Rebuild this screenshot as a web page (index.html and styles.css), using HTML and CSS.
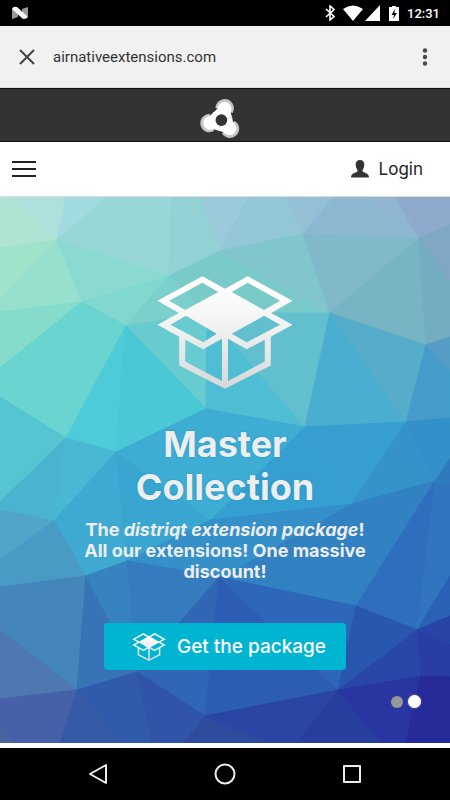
FILE: index.html
```html
<!DOCTYPE html>
<html lang="en">
<head>
<meta charset="utf-8">
<meta name="viewport" content="width=device-width, initial-scale=1">
<title>airnativeextensions.com</title>
<link rel="stylesheet" href="styles.css">
</head>
<body>
<svg class="defs" width="0" height="0" aria-hidden="true">
  <defs>
    <linearGradient id="shade" x1="0" y1="0" x2="0" y2="1">
      <stop offset="0" stop-color="#fff"/><stop offset=".3" stop-color="#f8f8f8"/><stop offset="1" stop-color="#d6d8d9"/>
    </linearGradient>
    <symbol id="box" viewBox="37 34 406 338">
      <path fill="url(#shade)" fill-rule="evenodd" d="M172 35 240 72 308 35 442 108 378 145 442 180 377 216V302L240 371 103 302V216L38 180 102 145 38 108ZM172 54 73 108 121 136 220 82ZM308 54 260 82 357 136 405 108ZM123 153 77 180 175 232 215 207ZM357 153 260 207 305 232 405 180ZM121 225V290L231 348V222L175 253ZM249 222V348L359 290V225L305 253Z"/>
    </symbol>
    <g id="tip">
      <path fill="#222" d="M-30-28A30 30 0 1 1 30-28L20-25H-20Z"/>
      <path fill="#c4c4c4" d="M-26-28A27 27 0 1 1 26-28L18-30H-18Z"/>
    </g>
    <path id="arm" fill="#fff" d="M-20-34A20 20 0 0 1 20-34C20-28 23-23 28-16L0 0-28-16C-23-23-20-28-20-34Z"/>
  </defs>
</svg>

<div class="status">
  <svg width="17" height="14" viewBox="0 0 17 14" aria-hidden="true">
    <path fill="#999" d="M0 3 6 6V11L0 13ZM10 3 16 1V12L10 8Z"/>
    <path fill="#fff" d="M0 3Q1 0 5 1L15 10Q16 13 11 13Z"/>
  </svg>
  <div class="status-icons">
    <svg class="bluetooth" width="10" height="16" viewBox="0 0 10 16" fill="none" stroke="#fff" stroke-width="1.6" aria-hidden="true"><path d="M1 4 9 11.500 5 15V1L9 4.500 1 12"/></svg>
    <svg class="wifi" width="20" height="16" viewBox="0 0 20 16" fill="#fff" aria-hidden="true"><path d="M0 4Q10-3 20 4L10 16Z"/></svg>
    <svg class="signal" width="15" height="16" viewBox="0 0 15 16" fill="#fff" aria-hidden="true"><path d="M0 16 15 0V16Z"/></svg>
    <svg class="battery" width="10" height="15" viewBox="0 0 10 15" aria-hidden="true"><path fill="#fff" d="M0 1H3V0H7V1H10V15H0Z"/><path d="M6 3 2.500 9H5L4 13 8 7H5.500Z"/></svg>
    <span>12:31</span>
  </div>
</div>

<header class="toolbar">
  <button class="icon-button" aria-label="Close"><svg width="16" height="16" viewBox="0 0 16 16" fill="none" stroke="#444" stroke-width="2"><path d="M1 1 15 15M15 1 1 15"/></svg></button>
  <span class="address">airnativeextensions.com</span>
  <button class="icon-button" aria-label="More options"><svg width="6" height="18" viewBox="0 0 6 18" fill="#4a4a4a"><circle cx="3" cy="2.500" r="2.200"/><circle cx="3" cy="9" r="2.200"/><circle cx="3" cy="15.500" r="2.200"/></svg></button>
</header>

<div class="brand">
  <a href="#" aria-label="Home"><svg width="42" height="42" viewBox="-65 -64 122 122">
    <g transform="rotate(15.5)">
      <use href="#tip"/><use href="#tip" transform="rotate(120)"/><use href="#tip" transform="rotate(240)"/>
      <use href="#arm"/><use href="#arm" transform="rotate(120)"/><use href="#arm" transform="rotate(240)"/>
    </g>
    <circle r="17" fill="#333"/>
  </svg></a>
</div>

<nav class="nav">
  <button class="icon-button" aria-label="Menu"><svg width="24" height="18" viewBox="0 0 24 18" stroke="#222" stroke-width="2"><path d="M0 2H24M0 9H24M0 16H24"/></svg></button>
  <a class="login" href="#"><svg width="18" height="18" viewBox="0 0 18 18" fill="#333" aria-hidden="true"><path d="M9 0C12 0 13.500 2 13.300 5 13.300 8 11.500 9 11.500 11 12 13 18 12.500 18 17.500H0C0 12.500 6 13 6.500 11 6.500 9 4.700 8 4.700 5 4.500 2 6 0 9 0Z"/></svg>Login</a>
</nav>

<main class="hero">
  <svg class="mosaic" viewBox="0 0 450 546" preserveAspectRatio="none" aria-hidden="true">
    <g>
      <path color="#afe3d3" d="M0 0H10L57 43 0 51Z"/>
      <path color="#afe1dc" d="M10 0H66L57 43Z"/>
      <path color="#a1dbe0" d="M66 0H107L57 43Z"/>
      <path color="#98d7d8" d="M107 0H172L169 79 57 43Z"/>
      <path color="#92d1d4" d="M172 0H201L220 54 169 79Z"/>
      <path color="#9bcbda" d="M201 0H249L220 54Z"/>
      <path color="#93c7d5" d="M249 0H286L303 37 220 54Z"/>
      <path color="#94c0d6" d="M286 0H334L303 37Z"/>
      <path color="#8cb8d1" d="M334 0H367L419 41 303 37Z"/>
      <path color="#91b4d1" d="M367 0H395L419 41Z"/>
      <path color="#8eabce" d="M395 0H450V28L419 41Z"/>
      <path color="#a0e3cb" d="M0 51 57 43 0 103Z"/>
      <path color="#97e0ce" d="M57 43 82 105 0 115V103Z"/>
      <path color="#8adad1" d="M57 43 169 79 82 105Z"/>
      <path color="#80d8ce" d="M82 105 169 79 126 129Z"/>
      <path color="#85dccb" d="M0 115 82 105 0 171Z"/>
      <path color="#6ad4d1" d="M0 171 82 105 126 129 66 241 0 200Z"/>
      <path color="#7cd0cc" d="M169 79 207 116 126 129Z"/>
      <path color="#7bcaca" d="M169 79 220 54 330 116 207 116Z"/>
      <path color="#82c6cd" d="M220 54 303 37 330 116Z"/>
      <path color="#82b9ca" d="M303 37 419 41 330 116Z"/>
      <path color="#77b5c4" d="M330 116 419 41 426 148Z"/>
      <path color="#74adc1" d="M419 41 450 84V140L426 148Z"/>
      <path color="#80a7c3" d="M419 41 450 28V84Z"/>
      <path color="#68cbd0" d="M126 129 207 116 206 212Z"/>
      <path color="#4fbdd3" d="M207 116 305 230 206 212Z"/>
      <path color="#62bfce" d="M207 116H330L305 230Z"/>
      <path color="#49aed0" d="M330 116 406 225 305 230Z"/>
      <path color="#57adc9" d="M330 116 426 148 406 225Z"/>
      <path color="#459cca" d="M426 148 450 172V221L406 225Z"/>
      <path color="#559dc5" d="M426 148 450 140V172Z"/>
      <path color="#4dcbd8" d="M126 129 116 255 66 241Z"/>
      <path color="#4bc7d6" d="M126 129 206 212 116 255Z"/>
      <path color="#55c5d1" d="M0 200 66 241 0 305Z"/>
      <path color="#4ab4d0" d="M66 241 54 324 0 313V305Z"/>
      <path color="#48b8d3" d="M66 241 116 255 54 324Z"/>
      <path color="#3eaad2" d="M116 255 127 364 86 379 54 324Z"/>
      <path color="#39a6d1" d="M116 255 211 323 127 364Z"/>
      <path color="#3eadd4" d="M116 255 206 212 305 230 211 323Z"/>
      <path color="#369fd1" d="M305 230 352 307 211 323Z"/>
      <path color="#379fd0" d="M305 230 406 225 352 307Z"/>
      <path color="#3693c9" d="M406 225 435 284 352 307Z"/>
      <path color="#3490c8" d="M406 225 450 221V262L435 284Z"/>
      <path color="#50a5c9" d="M0 313 54 324 0 363Z"/>
      <path color="#499bc5" d="M54 324 86 379 0 390V363Z"/>
      <path color="#358fc9" d="M211 323 352 307 222 381 127 364Z"/>
      <path color="#3181c3" d="M352 307 435 284 356 409 222 381Z"/>
      <path color="#2e6ebd" d="M435 284 417 433 356 409Z"/>
      <path color="#3175bf" d="M435 284 450 288V379L417 433Z"/>
      <path color="#3179bd" d="M435 284 450 262V288Z"/>
      <path color="#4485bb" d="M0 390 86 379 77 493 0 433Z"/>
      <path color="#3674b6" d="M86 379 137 475 77 493Z"/>
      <path color="#3683bd" d="M86 379 127 364 137 475Z"/>
      <path color="#347cbd" d="M127 364 219 380 137 475Z"/>
      <path color="#3166b5" d="M219 380 205 519 137 475Z"/>
      <path color="#2d5db3" d="M219 380 338 493 205 519Z"/>
      <path color="#2e67b9" d="M219 380 356 409 338 493Z"/>
      <path color="#2957b0" d="M356 409 417 433 338 493Z"/>
      <path color="#2b61b4" d="M450 379V419L417 433Z"/>
      <path color="#2947a9" d="M417 433 421 479 338 493Z"/>
      <path color="#2944a7" d="M417 433 450 419V448Z"/>
      <path color="#293ea4" d="M417 433 450 448V480L421 479Z"/>
      <path color="#4d78b2" d="M0 433 77 493 0 502Z"/>
      <path color="#4661a7" d="M0 502 77 493 60 546H15L0 535Z"/>
      <path color="#4b659f" d="M0 535 15 546H0Z"/>
      <path color="#355ba6" d="M77 493 122 546H60Z"/>
      <path color="#325aaa" d="M77 493 137 475 152 546H122Z"/>
      <path color="#3055a8" d="M137 475 205 519 184 546H152Z"/>
      <path color="#2d4c9e" d="M205 519 270 546H184Z"/>
      <path color="#2b45a5" d="M205 519 338 493 297 546H270Z"/>
      <path color="#283e9f" d="M338 493 382 546H297Z"/>
      <path color="#2935a0" d="M338 493 421 479 406 546H382Z"/>
      <path color="#262b99" d="M421 479 450 480V546H406Z"/>
    </g>
  </svg>
  <div class="content">
    <svg class="package-icon" width="136" height="113" aria-hidden="true"><use href="#box"/></svg>
    <h1>Master<br>Collection</h1>
    <p>The <em>distriqt extension package</em>!<br>All our extensions! One massive discount!</p>
    <a class="cta" href="#"><svg width="34" height="28" aria-hidden="true"><use href="#box"/></svg>Get the package</a>
  </div>
  <div class="dots">
    <button class="dot" aria-label="Slide 1"></button>
    <button class="dot current" aria-label="Slide 2"></button>
  </div>
</main>

<footer class="system-nav">
  <button class="icon-button" aria-label="Back"><svg width="22" height="22" viewBox="0 0 22 22"><path d="M19 2V20L3 11Z"/></svg></button>
  <button class="icon-button" aria-label="Home"><svg width="22" height="22" viewBox="0 0 22 22"><circle cx="11" cy="11" r="9.500"/></svg></button>
  <button class="icon-button" aria-label="Recent apps"><svg width="22" height="22" viewBox="0 0 22 22"><rect x="3" y="3" width="16" height="16"/></svg></button>
</footer>
</body>
</html>
```
FILE: styles.css
```css
* { box-sizing: border-box; }

body {
  margin: 0;
  min-height: 100vh;
  display: flex;
  flex-direction: column;
  background: #fff;
  color: #222;
  font-family: Roboto, sans-serif;
}

svg { display: block; flex: none; }
a { color: inherit; text-decoration: none; }
.defs { position: absolute; }

.icon-button {
  display: flex;
  padding: 0;
  border: 0;
  background: none;
}

.status {
  display: flex;
  align-items: center;
  justify-content: space-between;
  height: 26px;
  padding: 0 10px 0 12px;
  background: #000;
  color: #fff;
  font-size: 13px;
  font-weight: 500;
}
.status-icons { display: flex; align-items: center; }
.wifi { margin-left: 8px; }
.signal { margin-left: 2px; }
.battery { margin: 0 8px 0 9px; }

.toolbar {
  display: flex;
  align-items: center;
  height: 62px;
  padding: 0 22px 0 19px;
  background: #f1f1f1;
  border-bottom: 1px solid #ddd;
}
.address { flex: 1; margin-left: 18px; font-size: 15px; color: #333; }

.brand {
  display: flex;
  justify-content: center;
  align-items: center;
  height: 54px;
  padding-right: 10px;
  padding-top: 8px;
  background: #333;
  border-top: 1px solid #111;
  border-bottom: 1px solid #111;
}

.nav {
  display: flex;
  align-items: center;
  justify-content: space-between;
  height: 55px;
  padding: 0 27px 0 12px;
  border-bottom: 1px solid #ddd;
}
.login {
  display: flex;
  align-items: center;
  gap: 10px;
  font: 17px/24px Inter, sans-serif;
}

.hero {
  position: relative;
  flex: 1;
  display: flex;
  justify-content: center;
  padding: 79px 72px 72px;
  overflow: hidden;
  background: #3eaad2;
  color: #eee;
  font-family: Inter, sans-serif;
}
.mosaic { position: absolute; inset: 0; width: 100%; height: 100%; }
.mosaic path { fill: currentColor; stroke: currentColor; stroke-width: 1; stroke-linejoin: round; }

.content {
  position: relative;
  display: flex;
  flex-direction: column;
  align-items: center;
  text-align: center;
}
h1 {
  margin: 34px 0 0;
  font-size: 36px;
  line-height: 43px;
  font-weight: 700;
  text-shadow: 0 0 2px #1791c4;
}
p {
  margin: 10px 0 0;
  font-size: 18px;
  line-height: 21px;
  font-weight: 700;
}
.cta {
  display: flex;
  align-items: center;
  gap: 11px;
  height: 47px;
  margin-top: 41px;
  padding: 0 20px 0 28px;
  border-radius: 4px;
  background: #00b5d2;
  color: #fff;
  font-size: 19px;
  font-weight: 500;
}

.dots {
  position: absolute;
  right: 29px;
  bottom: 35px;
  display: flex;
  align-items: center;
  gap: 5px;
}
.dot {
  width: 12px;
  height: 12px;
  padding: 0;
  border: 0;
  border-radius: 50%;
  background: #999;
}
.dot.current { width: 13px; height: 13px; background: #fff; box-shadow: 0 0 2px #999; }

.system-nav {
  display: flex;
  align-items: center;
  justify-content: space-around;
  height: 57px;
  padding: 0 34px;
  border-top: 5px solid #fff;
  background: #000;
}
.system-nav svg { fill: none; stroke: #eee; stroke-width: 2; stroke-linejoin: round; }
```
